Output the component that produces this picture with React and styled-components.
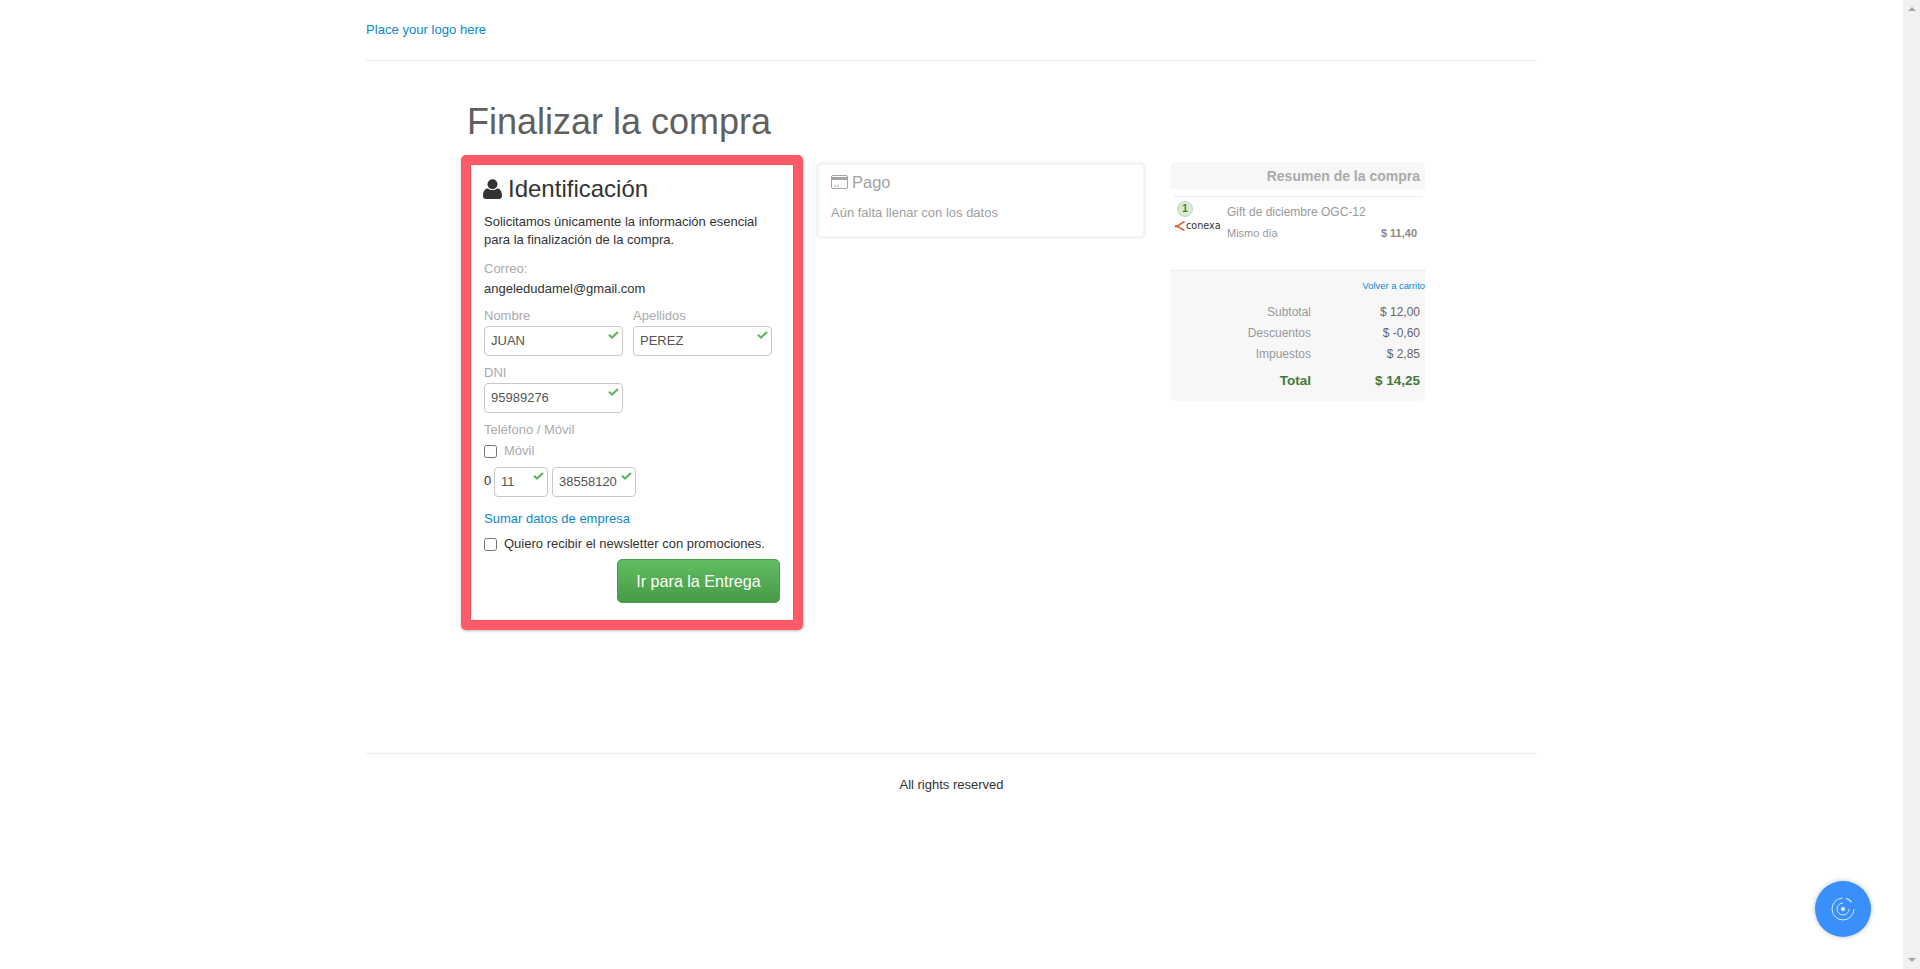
import React from "react";
import styled, { createGlobalStyle } from "styled-components";

const Global = createGlobalStyle`
  html, body { margin: 0; padding: 0; background: #fff; }
  body { font-family: "Liberation Sans", Arial, sans-serif; font-size: 12px; color: #333; height: 969px; overflow: hidden; }
  * { box-sizing: border-box; }
`;
const Page = styled.div`width: 1903px; height: 969px;`;
const Container = styled.div`width: 1171px; margin: 0 auto;`;
const Header = styled.header`height: 61px; padding-top: 21px; border-bottom: 1px solid #eee;`;
const LogoLink = styled.a`font-size: 13.1px; line-height: 17px; color: #0a88d0; text-decoration: none;`;
const Main = styled.main`height: 693px; padding: 41px 0 0 95px; border-bottom: 1px solid #eee;`;
const Title = styled.h1`margin: 0 0 13px 6px; font-size: 36px; line-height: 40px; font-weight: 400; color: #606060;`;
const Columns = styled.div`display: flex; align-items: flex-start;`;
const IdentCard = styled.section`
  width: 342px; height: 475px; padding: 10px; background: #ff5a68; border-radius: 5px;
  box-shadow: 0 1px 3px rgba(0,0,0,.25);
`;
const IdentInner = styled.div`height: 100%; background: #fff; padding: 9px 12px 9px 13px; box-shadow: 0 0 1px rgba(0,0,0,.35);`;
const Heading = styled.h2`display: flex; align-items: center; gap: 6px; margin: 0 0 9px -1px; font-size: 24px; line-height: 30px; font-weight: 400; color: #333;`;
const Intro = styled.p`margin: 0 0 11px; font-size: 13px; line-height: 18px; color: #333;`;
const FieldLabel = styled.div`font-size: 13px; line-height: 18px; color: #aaa; margin-bottom: ${p => p.$gap || 0}px;`;
const Email = styled.div`margin-top: 2px; font-size: 13px; line-height: 18px; color: #333;`;
const Row = styled.div`display: flex; gap: 10px; margin-top: 9px;`;
const Field = styled.div`width: 139px;`;
const InputBox = styled.div`
  position: relative; height: 30px; width: ${p => p.$w || 139}px; padding: 0 6px; border: 1px solid #c8c8c8; border-radius: 4px;
  font-size: 13px; line-height: 27px; color: #555; background: #fff;
`;
const Check = styled.svg`position: absolute; top: 4px; right: 3px; width: 11px; height: 8px;`;
const Stacked = styled.div`margin-top: ${p => p.$top}px;`;
const CheckRow = styled.label`display: flex; align-items: center; gap: 7px; margin-top: ${p => p.$top || 0}px; font-size: 13px; line-height: 18px; color: ${p => p.$muted ? "#aaa" : "#333"};`;
const Box = styled.span`width: 13px; height: 13px; border: 1px solid #767676; border-radius: 2.5px; background: #fff; flex: none;`;
const PhoneRow = styled.div`display: flex; align-items: center; gap: 4px; margin-top: 7px; font-size: 13px; color: #333;`;
const Prefix = styled.span`width: 6px; margin-top: -3px;`;
const CompanyLink = styled.a`display: block; margin-top: 13px; font-size: 13px; line-height: 18px; color: #0a88d0; text-decoration: none;`;
const Actions = styled.div`display: flex; justify-content: flex-end; margin: 6px 1px 0 0;`;
const Submit = styled.button`
  width: 163px; height: 44px; border: 1px solid #4b9a4b; border-radius: 5px; padding: 0; font: 16.1px "Liberation Sans", Arial, sans-serif; color: #fff;
  background: linear-gradient(#60bd61, #489b48);
`;
const PayCard = styled.section`
  width: 330px; height: 77px; margin: 7px 0 0 13px; padding: 5px 12px; border: 3px solid #f4f4f4; border-radius: 5px;
`;
const PayHeading = styled.h3`display: flex; align-items: center; gap: 4px; margin: 0 0 10px; font-size: 16.5px; line-height: 24px; font-weight: 400; color: #a3a3a3;`;
const PayText = styled.p`margin: 0; font-size: 13px; line-height: 18px; color: #a0a0a0;`;
const Summary = styled.aside`width: 255px; margin: 7px 0 0 24px;`;
const SummaryHead = styled.h3`
  margin: 0; height: 27px; padding-right: 5px; background: #f7f7f7; border-radius: 5px 5px 0 0;
  text-align: right; font-size: 14px; line-height: 29px; font-weight: 700; color: #aaa;
`;
const ItemRow = styled.div`
  position: relative; display: flex; height: 74px; margin: 7px 3px 0 5px; border-top: 1px dotted #ddd; padding-top: 1px;
`;
const Badge = styled.span`
  position: absolute; left: 2px; top: 4px; width: 16px; height: 16px; border-radius: 50%; background: #d9ecd0; border: 1px solid #c9d3c3;
  font-size: 10px; line-height: 14px; font-weight: 700; text-align: center; color: #4a7a3a;
`;
const Logo = styled.div`display: flex; align-items: center; gap: 1px; width: 52px; height: 16px; margin-top: 20px; font: 9.6px/16px "DejaVu Sans", sans-serif; color: #333; flex: none;`;
const ItemBody = styled.div`flex: 1; padding: 6px 0 0 0;`;
const ItemName = styled.div`font-size: 12px; line-height: 16px; color: #999;`;
const ItemMeta = styled.div`display: flex; justify-content: space-between; margin-top: 6px; padding-right: 5px; font-size: 11px; line-height: 14px; color: #999;`;
const ItemPrice = styled.b`color: #8a8a8a;`;
const Totals = styled.div`height: 131px; padding: 8px 0 0; background: #f7f7f7; border-top: 1px dotted #e4e4e4; border-radius: 0 0 5px 5px;`;
const BackLink = styled.a`display: block; text-align: right; font-size: 9.4px; line-height: 13px; color: #0a88d0; text-decoration: none; margin-bottom: 9px;`;
const TotalRow = styled.div`
  display: grid; grid-template-columns: 141px 109px; height: ${p => p.$big ? 32 : 21}px; align-items: center; text-align: right;
  font-size: ${p => p.$big ? 13.5 : 12}px; font-weight: ${p => p.$big ? 700 : 400}; color: ${p => p.$big ? "#3f7a37" : "#999"};
`;
const TotalValue = styled.span`color: ${p => p.$big ? "#3f7a37" : "#666"};`;
const Footer = styled.footer`padding-top: 22px; text-align: center; font-size: 13px; line-height: 18px; color: #333;`;
const Fab = styled.button`
  position: fixed; left: 1815px; top: 881px; width: 56px; height: 56px; padding: 0; border: 0; border-radius: 50%; background: #3990fb;
  box-shadow: 0 0 5px rgba(0,0,0,.25); display: flex; align-items: center; justify-content: center;
`;
const Scrollbar = styled.div`position: fixed; top: 0; right: 0; width: 17px; height: 969px; background: #f1f1f1;`;
const ArrowUp = styled.div`position: absolute; left: 5px; top: 7px; border: 4px solid transparent; border-top: 0; border-bottom: 4px solid #a3a3a3;`;
const ArrowDown = styled.div`position: absolute; left: 5px; bottom: 7px; border: 4px solid transparent; border-bottom: 0; border-top: 4px solid #a3a3a3;`;

const Tick = () => (
  <Check viewBox="0 0 11 8"><path d="M1 3.800 4 6.500 10 1" fill="none" stroke="#5cb85c" strokeWidth="2.200" /></Check>
);
const Input = ({ value, w }) => <InputBox $w={w}>{value}<Tick /></InputBox>;

export default function App() {
  return (
    <Page>
      <Global />
      <Container>
        <Header><LogoLink href="#">Place your logo here</LogoLink></Header>
        <Main>
          <Title>Finalizar la compra</Title>
          <Columns>
            <IdentCard>
              <IdentInner>
                <Heading>
                  <svg width="19" height="20" viewBox="0 0 19 20"><circle cx="9.500" cy="5.200" r="5" fill="#333" /><path d="M0 17c0-5 2-7.500 5-7.500 1.200 1 2.800 1.600 4.500 1.600s3.300-.6 4.500-1.600c3 0 5 2.500 5 7.500 0 2-1.300 3-3 3H3c-1.700 0-3-1-3-3z" fill="#333" /></svg>
                  Identificación
                </Heading>
                <Intro>Solicitamos únicamente la información esencial para la finalización de la compra.</Intro>
                <FieldLabel>Correo:</FieldLabel>
                <Email>angeledudamel@gmail.com</Email>
                <Row>
                  <Field><FieldLabel $gap={1}>Nombre</FieldLabel><Input value="JUAN" /></Field>
                  <Field><FieldLabel $gap={1}>Apellidos</FieldLabel><Input value="PEREZ" /></Field>
                </Row>
                <Stacked $top={8}><FieldLabel $gap={1}>DNI</FieldLabel><Input value="95989276" /></Stacked>
                <Stacked $top={8}><FieldLabel>Teléfono / Móvil</FieldLabel></Stacked>
                <CheckRow $muted $top={3}><Box />Móvil</CheckRow>
                <PhoneRow><Prefix>0</Prefix><Input value="11" w={54} /><Input value="38558120" w={84} /></PhoneRow>
                <CompanyLink href="#">Sumar datos de empresa</CompanyLink>
                <CheckRow $top={7}><Box />Quiero recibir el newsletter con promociones.</CheckRow>
                <Actions><Submit>Ir para la Entrega</Submit></Actions>
              </IdentInner>
            </IdentCard>
            <PayCard>
              <PayHeading>
                <svg width="17" height="14" viewBox="0 0 17 14"><rect x=".5" y=".5" width="16" height="13" rx="1.500" fill="none" stroke="#a3a3a3" /><rect x="1" y="2" width="15" height="3" fill="#a3a3a3" /><path d="M3 11h2M6 11h2" stroke="#a3a3a3" /></svg>
                Pago
              </PayHeading>
              <PayText>Aún falta llenar con los datos</PayText>
            </PayCard>
            <Summary>
              <SummaryHead>Resumen de la compra</SummaryHead>
              <ItemRow>
                <Badge>1</Badge>
                <Logo>
                  <svg width="10" height="12" viewBox="0 0 10 12"><path d="M9.500 1.500 2 6.200l7.500 4.300" fill="none" stroke="#d9663f" strokeWidth="1.600" /><path d="M0 6.200h4" stroke="#d9663f" strokeWidth="2.400" /></svg>
                  conexa
                </Logo>
                <ItemBody>
                  <ItemName>Gift de diciembre OGC-12</ItemName>
                  <ItemMeta>Mismo día<ItemPrice>$ 11,40</ItemPrice></ItemMeta>
                </ItemBody>
              </ItemRow>
              <Totals>
                <BackLink href="#">Volver a carrito</BackLink>
                <TotalRow><span>Subtotal</span><TotalValue>$ 12,00</TotalValue></TotalRow>
                <TotalRow><span>Descuentos</span><TotalValue>$ -0,60</TotalValue></TotalRow>
                <TotalRow><span>Impuestos</span><TotalValue>$ 2,85</TotalValue></TotalRow>
                <TotalRow $big><span>Total</span><TotalValue $big>$ 14,25</TotalValue></TotalRow>
              </Totals>
            </Summary>
          </Columns>
        </Main>
        <Footer>All rights reserved</Footer>
      </Container>
      <Fab aria-label="Ayuda">
        <svg width="26" height="26" viewBox="0 0 26 26" fill="none" stroke="#d5e6fd" strokeWidth="1">
          <circle cx="13" cy="13" r="2" fill="#fff" stroke="none" />
          <path d="M13 7A6 6 0 1 0 19 13" />
          <path d="M16 2.400A11 11 0 0 1 21.500 6" strokeWidth="1.300" />
          <path d="M24 13A11 11 0 1 1 12.500 2" />
        </svg>
      </Fab>
      <Scrollbar><ArrowUp /><ArrowDown /></Scrollbar>
    </Page>
  );
}
